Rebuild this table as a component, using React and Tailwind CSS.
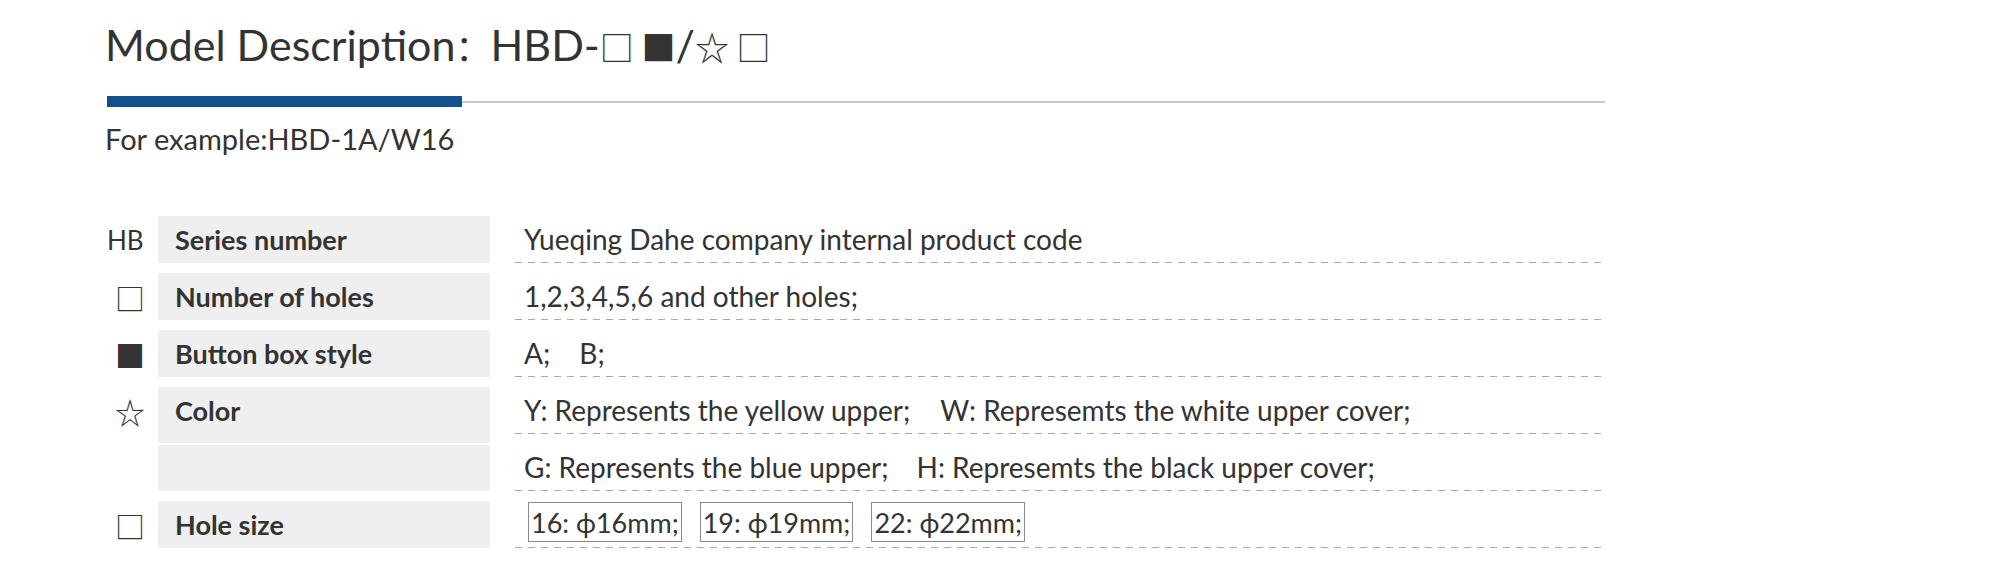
import React from "react";

const dash =
  "h-[1px] w-full bg-[repeating-linear-gradient(90deg,#a8a8a8_0_7px,transparent_7px_13px)]";

function Marker({ children, hb }) {
  return (
    <div className="w-[53px] shrink-0 flex items-center">
      {hb ? (
        <span className="pl-[2px] text-[26px] leading-none">{children}</span>
      ) : (
        <span className="pl-[10px] text-[30px] leading-none font-['Noto_Sans_CJK_SC',sans-serif]">
          {children}
        </span>
      )}
    </div>
  );
}

function Row({ marker, hb, label, labelClass = "h-[47px]", children, first, top = "items-center" }) {
  return (
    <div className={`flex h-[47px] ${first ? "mt-[63px]" : "mt-[10px]"}`}>
      <Marker hb={hb}>{marker}</Marker>
      <div
        className={`w-[332px] shrink-0 self-start bg-[#efefef] flex items-center pl-[17px] font-bold text-[27px] leading-none ${labelClass}`}
      >
        {label}
      </div>
      <div className="w-[25px] shrink-0" />
      <div className="flex-1 flex flex-col">
        <div className={`flex-1 flex pl-[9px] text-[28px] leading-none ${top}`}>{children}</div>
        <div className={dash} />
      </div>
    </div>
  );
}

export default function App() {
  return (
    <div className="w-[2000px] h-[571px] bg-white overflow-hidden text-[#333] font-['Lato','Noto_Sans',sans-serif]">
      <div className="ml-[105px] w-[1500px]">
        {/* Heading */}
        <div className="h-[96px] pt-[23px] text-[43px] leading-none whitespace-nowrap">
          Model Description
          <span className="font-['Noto_Sans_CJK_SC',sans-serif] text-[35px]">：</span>
          HBD-
          <span className="font-['Noto_Sans_CJK_SC',sans-serif] text-[34px]">□ ■</span>/
          <span className="font-['Noto_Sans_CJK_SC',sans-serif] text-[34px]">☆ □</span>
        </div>
        <div className="flex items-center h-[11px]">
          <div className="ml-[2px] w-[355px] h-[11px] bg-[#14508c]" />
          <div className="flex-1 h-[2px] bg-[#c8c8c8]" />
        </div>
        <div className="mt-[17px] text-[29px] leading-none">For example:HBD-1A/W16</div>

        {/* Table */}
        <Row first hb marker="HB" label="Series number">
          Yueqing Dahe company internal product code
        </Row>
        <Row marker="□" label="Number of holes">
          1,2,3,4,5,6 and other holes;
        </Row>
        <Row marker="■" label="Button box style">
          <span>A;</span>
          <span className="ml-[29px]">B;</span>
        </Row>
        <Row marker="☆" label="Color" labelClass="h-[56px] pb-[9px]">
          <span>Y: Represents the yellow upper;</span>
          <span className="ml-[30px]">W: Represemts the white upper cover;</span>
        </Row>
        <Row label="" labelClass="h-[46px] mt-[1px]">
          <span>G: Represents the blue upper;</span>
          <span className="ml-[28px]">H: Represemts the black upper cover;</span>
        </Row>
        <Row marker="□" label="Hole size" top="items-start">
          <div className="flex gap-[18px] mt-[1px] ml-[4px] text-[27px]">
            {["16: ϕ16mm;", "19: ϕ19mm;", "22: ϕ22mm;"].map((t) => (
              <span
                key={t}
                className="h-[40px] px-[2px] flex items-center border border-[#8a8a8a] whitespace-nowrap"
              >
                {t}
              </span>
            ))}
          </div>
        </Row>
      </div>
    </div>
  );
}
